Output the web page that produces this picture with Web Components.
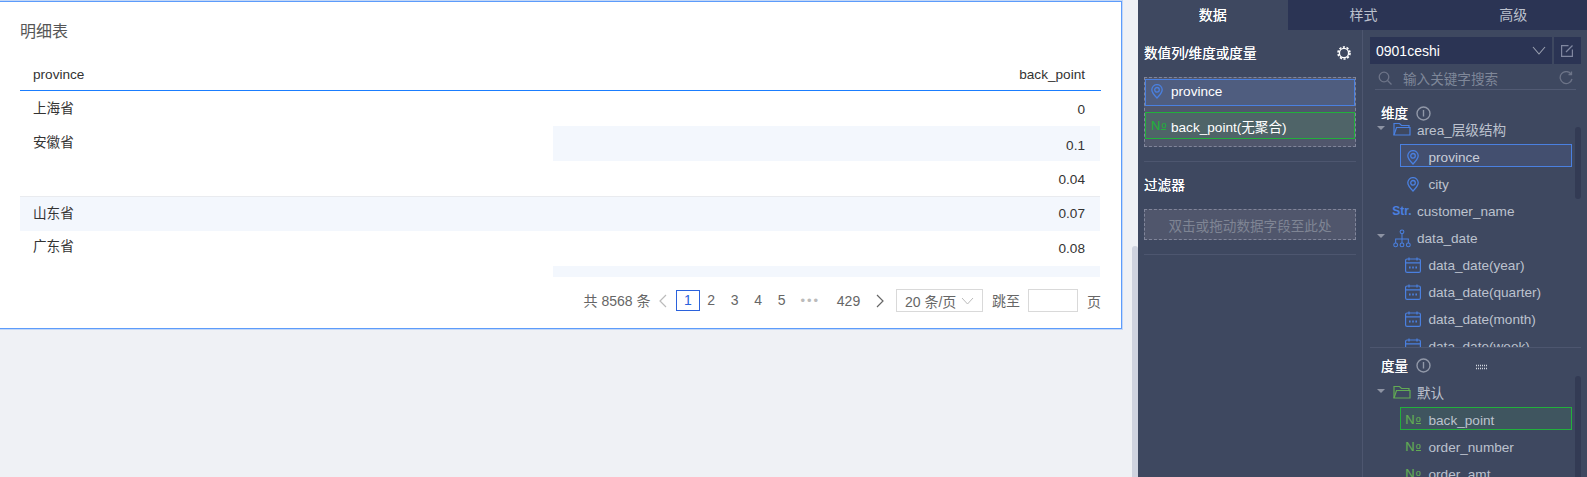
<!DOCTYPE html>
<html lang="zh">
<head>
<meta charset="utf-8">
<title>明细表</title>
<style>
    html, body { margin: 0; height: 100%; overflow: hidden; }
    body { font-family: "Liberation Sans", "Noto Sans CJK SC", sans-serif; font-size: 13.6px; }
</style>
</head>
<body>
<report-page></report-page>

<script>
const FONT = `"Liberation Sans", "Noto Sans CJK SC", sans-serif`;

const ICONS = {
    pin: `<svg width="12" height="15" viewBox="0 0 12 15" fill="none" stroke="#4a80e0" stroke-width="1.300"><path d="M6 14C3 11 .8 8.600 .8 5.800a5.200 5.200 0 0 1 10.400 0C11.200 8.600 9 11 6 14z"/><circle cx="6" cy="5.800" r="2.300"/></svg>`,
    folderBlue: `<svg width="18" height="14" viewBox="0 0 18 14" fill="none" stroke="#4a80e0" stroke-width="1.200"><path d="M1 13V1.500h5.500l2 2H16V5.500"/><path d="M1 13L3.500 5.500H17V13z"/></svg>`,
    folderGreen: `<svg width="18" height="14" viewBox="0 0 18 14" fill="none" stroke="#62ab54" stroke-width="1.200"><path d="M1 13V1.500h5.500l2 2H16V5.500"/><path d="M1 13L3.500 5.500H17V13z"/></svg>`,
    tree: `<svg width="19" height="19" viewBox="0 0 19 19" fill="none" stroke="#4a80e0" stroke-width="1.100"><circle cx="9.500" cy="2.500" r="2"/><circle cx="2.800" cy="16.300" r="2"/><circle cx="9.500" cy="16.300" r="2"/><circle cx="16.200" cy="16.300" r="2"/><path d="M9.500 4.500V14.300M2.800 14.300V10H16.200V14.300"/></svg>`,
    cal: `<svg width="16" height="16" viewBox="0 0 16 16" fill="none" stroke="#4a80e0" stroke-width="1.200"><rect x=".6" y="2" width="14.800" height="13.400" rx="1.500"/><path d="M.6 5.800H15.400M4 .4V3.400M12 .4V3.400"/><path d="M4 10.500h1.600M7.200 10.500h1.600M10.400 10.500h1.600" stroke-width="2"/></svg>`
};

// one field icon: an svg from the table above, or a short type label
class FieldIcon extends HTMLElement {
    connectedCallback() {
        const type = this.getAttribute('type');
        this.attachShadow({ mode: 'open' });
        let body = ICONS[type] || '';
        if (type === 'no') body = `<span class="no">N<span class="o">o</span></span>`;
        if (type === 'str') body = `<span class="str">Str.</span>`;
        this.shadowRoot.innerHTML = `
            <style>
                :host { display: inline-flex; align-items: center; justify-content: center; flex: none; }
                svg { display: block; }
                .no { display: flex; align-items: flex-end; font: 13px/10px ${FONT}; height: 10px; color: var(--no-color, #62ab54); -webkit-text-stroke: .2px var(--no-color, #62ab54); }
                .o { display: block; margin-left: 1px; width: 5px; font-size: 9px; line-height: 7px; text-align: center; border-bottom: 1px solid var(--no-color, #62ab54); margin-bottom: 1px; }
                .str { font: bold 12px ${FONT}; color: #4a80e0; }
            </style>
            ${body}`;
    }
}
customElements.define('field-icon', FieldIcon);

class DetailTable extends HTMLElement {
    connectedCallback() {
        this.attachShadow({ mode: 'open' });
        // [province, value, rows it spans, line height of the value]; the last row is cut by the table's height
        const rows = [
            ['上海省', '0', 1, 37], ['安徽省', '0.1', 2, 39], [null, '0.04', 1, 37],
            ['山东省', '0.07', 1, 35], ['广东省', '0.08', 2, 35], [null, '', 1, 35]
        ];
        let cells = '';
        rows.forEach((r, i) => {
            const stripe = i % 2 === 1 ? 'stripe' : '';
            const line = i === 3 ? 'line' : '';
            if (r[0]) {
                const span = r[2] === 2 ? 'span2' : `${stripe} ${line}`;
                const lh = i === 1 ? 'style="line-height:34px"' : '';
                cells += `<div class="cell ${span}" ${lh}>${r[0]}</div>`;
            }
            cells += `<div class="cell num ${stripe} ${line}" style="line-height:${r[3]}px">${r[1]}</div>`;
        });
        this.shadowRoot.innerHTML = `
            <style>
                :host { display: block; margin: 0 20px; color: #333; font-size: 13.6px; }
                .head, .body { display: grid; grid-template-columns: 533px 547px; }
                .head { height: 32px; box-sizing: border-box; border-bottom: 1px solid #1a7dff; align-items: center; }
                .head div { padding: 0 15px 0 13px; }
                .body { grid-auto-rows: 35px; height: 186px; overflow: hidden; }
                .cell { padding: 0 15px 0 13px; line-height: 35px; }
                .num { text-align: right; }
                .stripe { background: #f3f7fd; }
                .line { box-shadow: inset 0 1px 0 #e9ebef; }
                .span2 { grid-row: span 2; line-height: 32px; }
            </style>
            <div class="head"><div>province</div><div class="num">back_point</div></div>
            <div class="body">${cells}</div>`;
    }
}
customElements.define('detail-table', DetailTable);

class TablePager extends HTMLElement {
    connectedCallback() {
        this.attachShadow({ mode: 'open' });
        const pages = ['1', '2', '3', '4', '5'].map(p => `<span class="pg ${p === '1' ? 'on' : ''}">${p}</span>`).join('');
        this.shadowRoot.innerHTML = `
            <style>
                :host { display: flex; justify-content: flex-end; align-items: center; height: 23px; margin: 12px 20px 16px 0; color: #666; font-size: 14px; }
                .total { margin-top: -2px; }
                .pg { width: 23.500px; height: 21px; line-height: 21px; text-align: center; box-sizing: border-box; }
                .pg.on { border: 1px solid #2b62dc; color: #2b62dc; line-height: 19px; width: 24px; margin-right: -.5px; }
                .chev { width: 24px; display: flex; justify-content: center; }
                .prev { margin-right: 1.500px; }
                .dots { width: 33.500px; text-align: center; color: #bbb; letter-spacing: 2px; font-size: 13px; }
                .last { width: 41px; text-align: center; margin-right: -1px; padding-left: 1px; box-sizing: content-box; }
                .sel { width: 87px; height: 23px; box-sizing: border-box; border: 1px solid #d9d9d9; margin-left: 4px; display: flex; align-items: center; padding-left: 8px; gap: 5px; white-space: nowrap; }
                .jump { margin-left: 9px; margin-top: -2px; }
                .inp { width: 50px; height: 23px; box-sizing: border-box; border: 1px solid #d9d9d9; margin: 0 9px 0 8px; }
            </style>
            <span class="total">共 8568 条</span>
            <span class="chev prev"><svg width="9" height="14" viewBox="0 0 9 14" fill="none" stroke="#bbb" stroke-width="1.200"><path d="M8 1L2 7l6 6"/></svg></span>
            ${pages}
            <span class="dots">•••</span>
            <span class="last">429</span>
            <span class="chev"><svg width="9" height="14" viewBox="0 0 9 14" fill="none" stroke="#666" stroke-width="1.200"><path d="M1 1l6 6-6 6"/></svg></span>
            <span class="sel">20 条/页<svg width="13" height="8" viewBox="0 0 13 8" fill="none" stroke="#bbb"><path d="M1 1l5.500 6L12 1"/></svg></span>
            <span class="jump">跳至</span>
            <span class="inp"></span>
            <span>页</span>`;
    }
}
customElements.define('table-pager', TablePager);

class ReportCard extends HTMLElement {
    connectedCallback() {
        this.attachShadow({ mode: 'open' }).innerHTML = `
            <style>
                :host { display: block; width: 1123px; margin: 1px 0 0 -1px; box-sizing: border-box; background: #fff; border: 1px solid #5d9cfb; box-shadow: 0 0 0 1px rgba(93, 156, 251, .3); }
                .title { height: 57px; padding-left: 20px; box-sizing: border-box; font-size: 16px; line-height: 59px; color: #555; }
            </style>
            <div class="title">明细表</div>
            <slot></slot>`;
    }
}
customElements.define('report-card', ReportCard);

class DropChip extends HTMLElement {
    connectedCallback() {
        const green = this.hasAttribute('green');
        this.attachShadow({ mode: 'open' }).innerHTML = `
            <style>
                :host { display: flex; align-items: center; height: 27px; box-sizing: border-box; color: #fff; font-size: 13.6px;
                        padding-bottom: ${green ? 0 : 2}px;
                        border: 1px solid ${green ? '#22b03c' : '#4a80e0'}; background: ${green ? '#4f6468' : '#4f5d7f'}; --no-color: #22b03c; }
                .ic { width: 25px; box-sizing: border-box; padding-left: 5px; display: flex; }
            </style>
            <span class="ic"><slot name="icon"></slot></span><slot></slot>`;
    }
}
customElements.define('drop-chip', DropChip);

class TreeRow extends HTMLElement {
    connectedCallback() {
        const level = this.getAttribute('level') || '0';
        const sel = this.getAttribute('sel');
        const icon = this.getAttribute('icon');
        const caret = this.hasAttribute('caret') ? '<i class="caret"></i>' : '';
        const flat = icon.startsWith('folder') ? 'flat' : '';
        this.attachShadow({ mode: 'open' }).innerHTML = `
            <style>
                :host { display: block; flex: none; height: 23px; margin-bottom: 4px; color: #bcc2ce; font-size: 13.6px; }
                .row { display: flex; align-items: center; height: 23px; box-sizing: border-box; padding-top: 3px; position: relative; white-space: nowrap; }
                .flat { padding-top: 0; }
                .l0 { padding-left: 47px; }
                .l1 { margin-left: 30px; width: 172px; padding-left: 27.500px; border: 1px solid transparent; }
                .blue { border-color: #4a80e0; background: #434f6f; color: #c8cdd8; }
                .green { border-color: #22b03c; background: #3f555f; }
                field-icon { position: absolute; }
                .l0 field-icon { left: 23px; width: 18px; }
                .l1 field-icon { left: 4px; width: 16px; }
                .caret { position: absolute; left: 7px; top: 9px; border: 4px solid transparent; border-top: 4px solid #8d93a3; border-bottom: 0; }
            </style>
            <div class="row l${level} ${sel || ''} ${flat}">${caret}<field-icon type="${icon}"></field-icon><slot></slot></div>`;
    }
}
customElements.define('tree-row', TreeRow);

class FieldTree extends HTMLElement {
    connectedCallback() {
        const label = this.getAttribute('label');
        const bar = this.getAttribute('bar').split(',');
        const grip = this.hasAttribute('grip') ? `<svg class="grip" width="12" height="6" viewBox="0 0 12 6" stroke="#d3d6df" stroke-width="1.300"><path d="M0 1.500h12M0 4.500h12" stroke-dasharray="1 1"/></svg>` : '';
        this.attachShadow({ mode: 'open' }).innerHTML = `
            <style>
                :host { display: flex; flex-direction: column; position: relative; overflow: hidden; }
                .hd { flex: none; display: flex; align-items: center; color: #fff; font-size: 13.6px; line-height: 20px; padding-left: 11px; gap: 8px; height: var(--hd-h); padding-top: var(--hd-top); box-sizing: border-box; text-shadow: 0 0 .5px #fff; }
                .i { flex: none; margin-top: -2px; }
                .grip { margin-left: 37px; }
                .body { flex: 1; display: flex; flex-direction: column; overflow: hidden; }
                .bar { position: absolute; right: 0; width: 6px; top: ${bar[0]}px; height: ${bar[1]}px; background: #333b54; border-radius: 3px; }
            </style>
            <div class="hd">${label}<svg class="i" width="15" height="15" viewBox="0 0 15 15" fill="none" stroke="#9198a8" stroke-width="1.400"><circle cx="7.500" cy="7.500" r="6.500"/><path d="M7.500 4v6.500"/></svg>${grip}</div>
            <div class="body"><slot></slot></div>
            <span class="bar"></span>`;
    }
}
customElements.define('field-tree', FieldTree);

class ConfigPanel extends HTMLElement {
    connectedCallback() {
        this.attachShadow({ mode: 'open' }).innerHTML = `
            <style>
                :host { display: flex; flex-direction: column; width: 449px; flex: none; height: 477px; overflow: hidden; background: #3e4860; font-family: ${FONT}; color: #fff; font-size: 13.6px; }
                .tabs { display: flex; flex: none; height: 30px; background: #2b3454; color: #bcc1cd; line-height: 30px; text-align: center; font-size: 14px; }
                .tabs span { width: 150px; box-sizing: border-box; padding-left: 2px; }
                .tabs .on { background: #3e4860; color: #fff; padding-left: 0; text-shadow: 0 0 .5px #fff; }
                .cols { flex: 1; display: flex; min-height: 0; }
                .left { width: 225px; flex: none; box-sizing: border-box; border-right: 1px solid #4d566f; padding: 0 6px; }
                .ttl { display: flex; align-items: center; justify-content: space-between; height: 20px; line-height: 20px; margin-top: 14px; text-shadow: 0 0 .5px #fff; }
                .ttl svg { margin: -3px 4px 0 0; }
                .zone { border: 1px dashed #80859a; background: #50566c; }
                .chips { margin-top: 13px; padding: 1px 0 7px; display: flex; flex-direction: column; gap: 6px; }
                .empty { margin-top: 13px; height: 31px; box-sizing: border-box; display: flex; align-items: center; justify-content: center; color: #7f8594; }
                hr { border: 0; height: 1px; background: #4d566f; margin: 14px 0 0; }
                .right { flex: 1; min-width: 0; display: flex; flex-direction: column; padding: 7px 6px 0 7px; }
                .src { display: flex; flex: none; gap: 2px; height: 27px; }
                .src .name { flex: 1; background: #2b3454; display: flex; align-items: center; justify-content: space-between; padding: 0 6px; font-size: 14px; }
                .src .ed { width: 27px; box-sizing: border-box; padding-right: 2px; background: #2b3454; display: flex; align-items: center; justify-content: center; }
                .search { flex: none; height: 26px; margin: 0 5px; box-sizing: border-box; padding: 2px 0 0 3px; border-bottom: 1px solid #515a73; display: flex; align-items: center; color: #7f8799; gap: 11px; }
                .search svg:last-child { margin-left: auto; margin-right: 3px; }
                .dim { flex: none; height: 257px; --hd-h: 27px; --hd-top: 21px; }
                .mea { flex: 1; min-height: 0; border-top: 1px solid #4d566f; --hd-h: 32px; --hd-top: 5px; }
            </style>
            <div class="tabs"><span class="on">数据</span><span>样式</span><span>高级</span></div>
            <div class="cols">
                <div class="left">
                    <div class="ttl">数值列/维度或度量
                        <svg width="16" height="16" viewBox="0 0 16 16" fill="none" stroke="#fff"><circle cx="8" cy="8" r="4.600" stroke-width="1.400"/><circle cx="8" cy="8" r="6" stroke-width="1.600" stroke-dasharray="2.200 1.570"/></svg>
                    </div>
                    <div class="zone chips"><slot name="chips"></slot></div>
                    <hr>
                    <div class="ttl">过滤器</div>
                    <div class="zone empty">双击或拖动数据字段至此处</div>
                    <hr>
                </div>
                <div class="right">
                    <div class="src">
                        <div class="name">0901ceshi<svg width="14" height="9" viewBox="0 0 14 9" fill="none" stroke="#9aa0b0" stroke-width="1.100"><path d="M1 1l6 7 6-7"/></svg></div>
                        <div class="ed"><svg width="12" height="12" viewBox="0 0 12 12" fill="none" stroke="#8087a0" stroke-width="1.200"><path d="M7.500 .6H.6v10.800h10.800V4.500"/><path d="M11.500 .5L5 7"/></svg></div>
                    </div>
                    <div class="search">
                        <svg width="14" height="14" viewBox="0 0 14 14" fill="none" stroke="#6d7488" stroke-width="1.300"><circle cx="6" cy="6" r="4.800"/><path d="M9.500 9.500L13.500 13.500"/></svg>
                        输入关键字搜索
                        <svg width="14" height="14" viewBox="0 0 14 14" fill="none" stroke="#6d7488" stroke-width="1.300"><path d="M12 3A6 6 0 1 0 13 8"/><path d="M12.500 .5V3.500H9.500"/></svg>
                    </div>
                    <field-tree class="dim" label="维度" bar="37,72"><slot name="dim"></slot></field-tree>
                    <field-tree class="mea" label="度量" bar="28,110" grip><slot name="mea"></slot></field-tree>
                </div>
            </div>`;
    }
}
customElements.define('config-panel', ConfigPanel);

class ReportPage extends HTMLElement {
    connectedCallback() {
        this.attachShadow({ mode: 'open' }).innerHTML = `
            <style>
                :host { display: flex; height: 477px; width: 1587px; font-family: ${FONT}; overflow: hidden; }
                .main { width: 1138px; flex: none; background: #eff1f5; position: relative; overflow: hidden; }
                .thumb { position: absolute; right: 0; top: 246px; bottom: 0; width: 6px; background: #cfd3df; border-radius: 3px 3px 0 0; }
            </style>
            <div class="main">
                <report-card><detail-table></detail-table><table-pager></table-pager></report-card>
                <span class="thumb"></span>
            </div>
            <config-panel>
                <drop-chip slot="chips"><field-icon slot="icon" type="pin"></field-icon>province</drop-chip>
                <drop-chip slot="chips" green><field-icon slot="icon" type="no"></field-icon>back_point(无聚合)</drop-chip>

                <tree-row slot="dim" caret icon="folderBlue">area_层级结构</tree-row>
                <tree-row slot="dim" level="1" sel="blue" icon="pin">province</tree-row>
                <tree-row slot="dim" level="1" icon="pin">city</tree-row>
                <tree-row slot="dim" icon="str">customer_name</tree-row>
                <tree-row slot="dim" caret icon="tree">data_date</tree-row>
                <tree-row slot="dim" level="1" icon="cal">data_date(year)</tree-row>
                <tree-row slot="dim" level="1" icon="cal">data_date(quarter)</tree-row>
                <tree-row slot="dim" level="1" icon="cal">data_date(month)</tree-row>
                <tree-row slot="dim" level="1" icon="cal">data_date(week)</tree-row>

                <tree-row slot="mea" caret icon="folderGreen">默认</tree-row>
                <tree-row slot="mea" level="1" sel="green" icon="no">back_point</tree-row>
                <tree-row slot="mea" level="1" icon="no">order_number</tree-row>
                <tree-row slot="mea" level="1" icon="no">order_amt</tree-row>
            </config-panel>`;
    }
}
customElements.define('report-page', ReportPage);
</script>
</body>
</html>
